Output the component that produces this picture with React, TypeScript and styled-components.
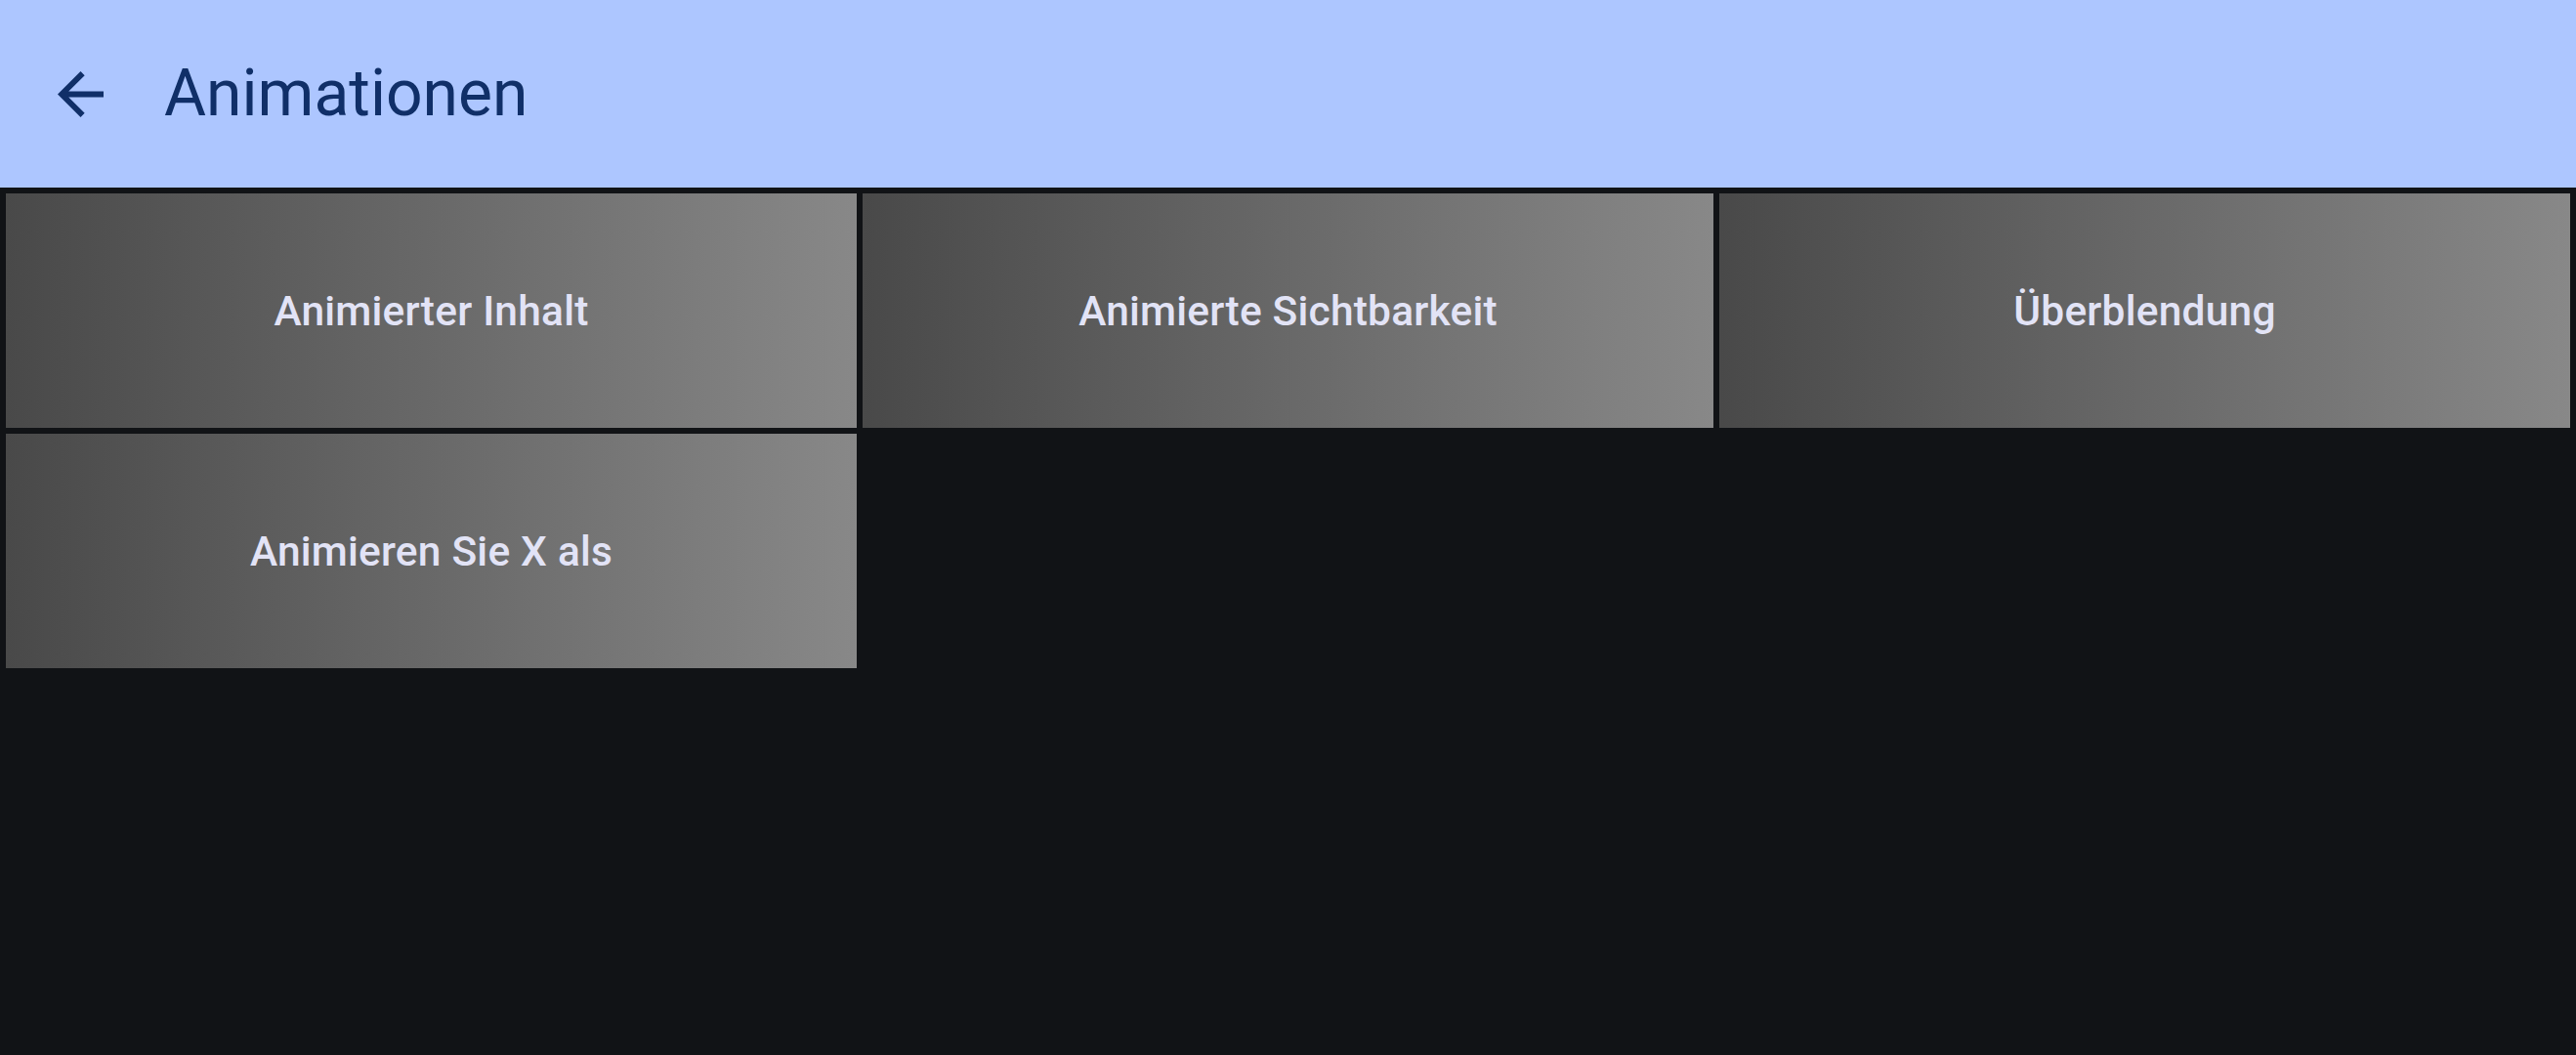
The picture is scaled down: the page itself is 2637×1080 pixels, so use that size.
import React from "react";
import styled, { createGlobalStyle } from "styled-components";

const Global = createGlobalStyle`
  html, body { margin: 0; padding: 0; background: #111316; }
  body { font-family: Roboto, "Noto Sans", "Liberation Sans", sans-serif; }
  * { box-sizing: border-box; }
`;

const Screen = styled.div`
  width: 2637px;
  height: 1080px;
  background: #111316;
  display: flex;
  flex-direction: column;
  overflow: hidden;
`;

const TopBar = styled.header`
  height: 192px;
  flex: none;
  background: #adc6ff;
  display: flex;
  align-items: center;
  padding-left: 59px;
  gap: 62px;
`;

const BackButton = styled.button`
  border: 0;
  padding: 0;
  background: transparent;
  display: flex;
  width: 47px;
  height: 47px;
  color: #102f68;
`;

const Title = styled.h1`
  margin: 0;
  font-size: 66px;
  font-weight: 400;
  color: #102f68;
  letter-spacing: 0;
  line-height: 1;
`;

const Grid = styled.div`
  display: grid;
  grid-template-columns: repeat(3, 1fr);
  grid-auto-rows: 240px;
  gap: 6px;
  padding: 6px;
`;

const Tile = styled.button`
  border: 0;
  padding: 0;
  background: linear-gradient(90deg, #494949 0%, #888888 100%);
  display: flex;
  align-items: center;
  justify-content: center;
  color: #e2e3f6;
  font-family: Roboto, "Noto Sans", "Liberation Sans", sans-serif;
  font-size: 42.5px;
  font-weight: 500;
  letter-spacing: 0.2px;
`;

const items = [
  "Animierter Inhalt",
  "Animierte Sichtbarkeit",
  "Überblendung",
  "Animieren Sie X als",
];

export default function App() {
  return (
    <Screen>
      <Global />
      <TopBar>
        <BackButton aria-label="Zurück">
          <svg width="47" height="47" viewBox="4 4 16 16" fill="currentColor">
            <path d="M20 11H7.83l5.59-5.59L12 4l-8 8 8 8 1.41-1.41L7.83 13H20v-2z" />
          </svg>
        </BackButton>
        <Title>Animationen</Title>
      </TopBar>
      <Grid>
        {items.map((t) => (
          <Tile key={t}>{t}</Tile>
        ))}
      </Grid>
    </Screen>
  );
}
